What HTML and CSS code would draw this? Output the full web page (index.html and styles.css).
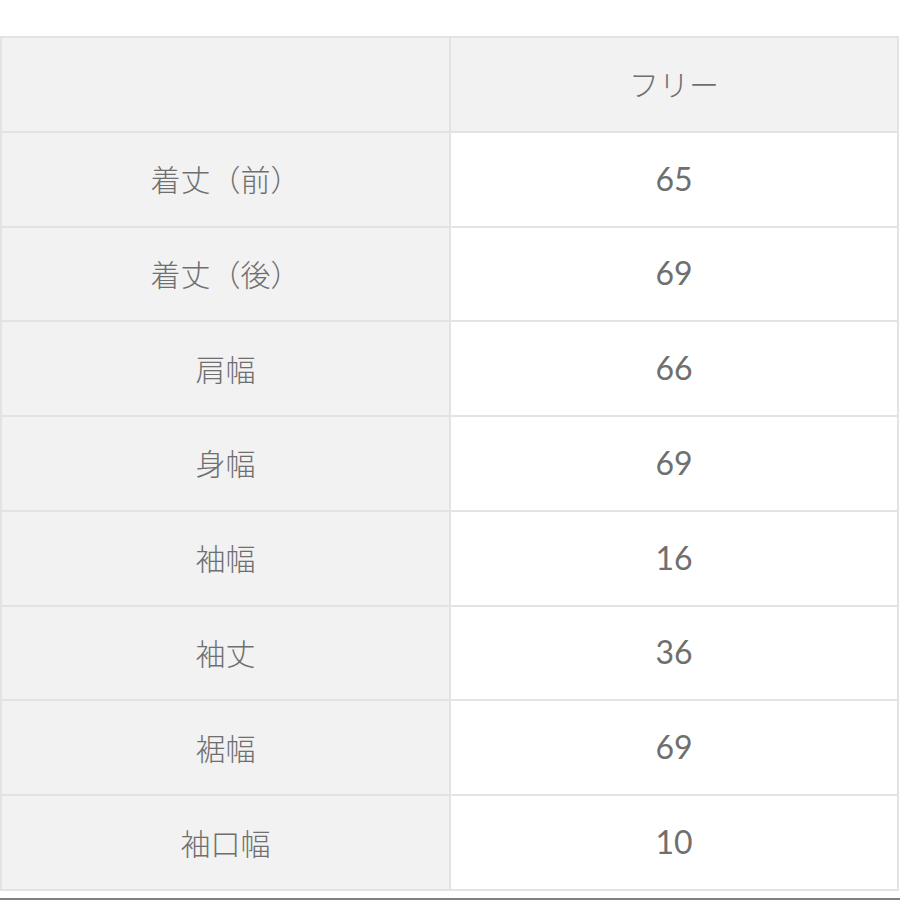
FILE: index.html
```html
<!DOCTYPE html>
<html lang="ja">
<head>
<meta charset="utf-8">
<link rel="stylesheet" href="styles.css">
</head>
<body>
<div class="page">
<table class="size-table">
  <tr class="head"><td class="label"></td><td class="val">フリー</td></tr>
  <tr><td class="label">着丈（前）</td><td class="val">65</td></tr>
  <tr><td class="label">着丈（後）</td><td class="val">69</td></tr>
  <tr><td class="label">肩幅</td><td class="val">66</td></tr>
  <tr><td class="label">身幅</td><td class="val">69</td></tr>
  <tr><td class="label">袖幅</td><td class="val">16</td></tr>
  <tr><td class="label">袖丈</td><td class="val">36</td></tr>
  <tr><td class="label">裾幅</td><td class="val">69</td></tr>
  <tr><td class="label">袖口幅</td><td class="val">10</td></tr>
</table>
<div class="edge"></div>
</div>
</body>
</html>
```

FILE: styles.css
```css
html, body {
  margin: 0;
  padding: 0;
  background: #ffffff;
}
.page {
  width: 900px;
  height: 900px;
  display: flex;
  flex-direction: column;
  padding-top: 36px;
  box-sizing: border-box;
}
.size-table {
  width: 899px;
  height: 853px;
  border-collapse: collapse;
  table-layout: fixed;
  font-family: Lato, "Noto Sans CJK JP", sans-serif;
  color: #6f6f6f;
}
.size-table tr {
  height: 94.78px;
}
.size-table td {
  border: 2px solid #e3e3e3;
  text-align: center;
  vertical-align: middle;
  padding: 0 0 2px 0;
  font-size: 30px;
}
.size-table td.label {
  width: 447px;
  background: #f2f2f2;
  font-weight: 300;
}
.size-table td.val {
  background: #ffffff;
  font-size: 32px;
}
.size-table tr.head td.val {
  background: #f2f2f2;
  font-size: 30px;
  font-weight: 300;
}
.edge {
  margin-top: auto;
  height: 2px;
  background: #808080;
}
```
